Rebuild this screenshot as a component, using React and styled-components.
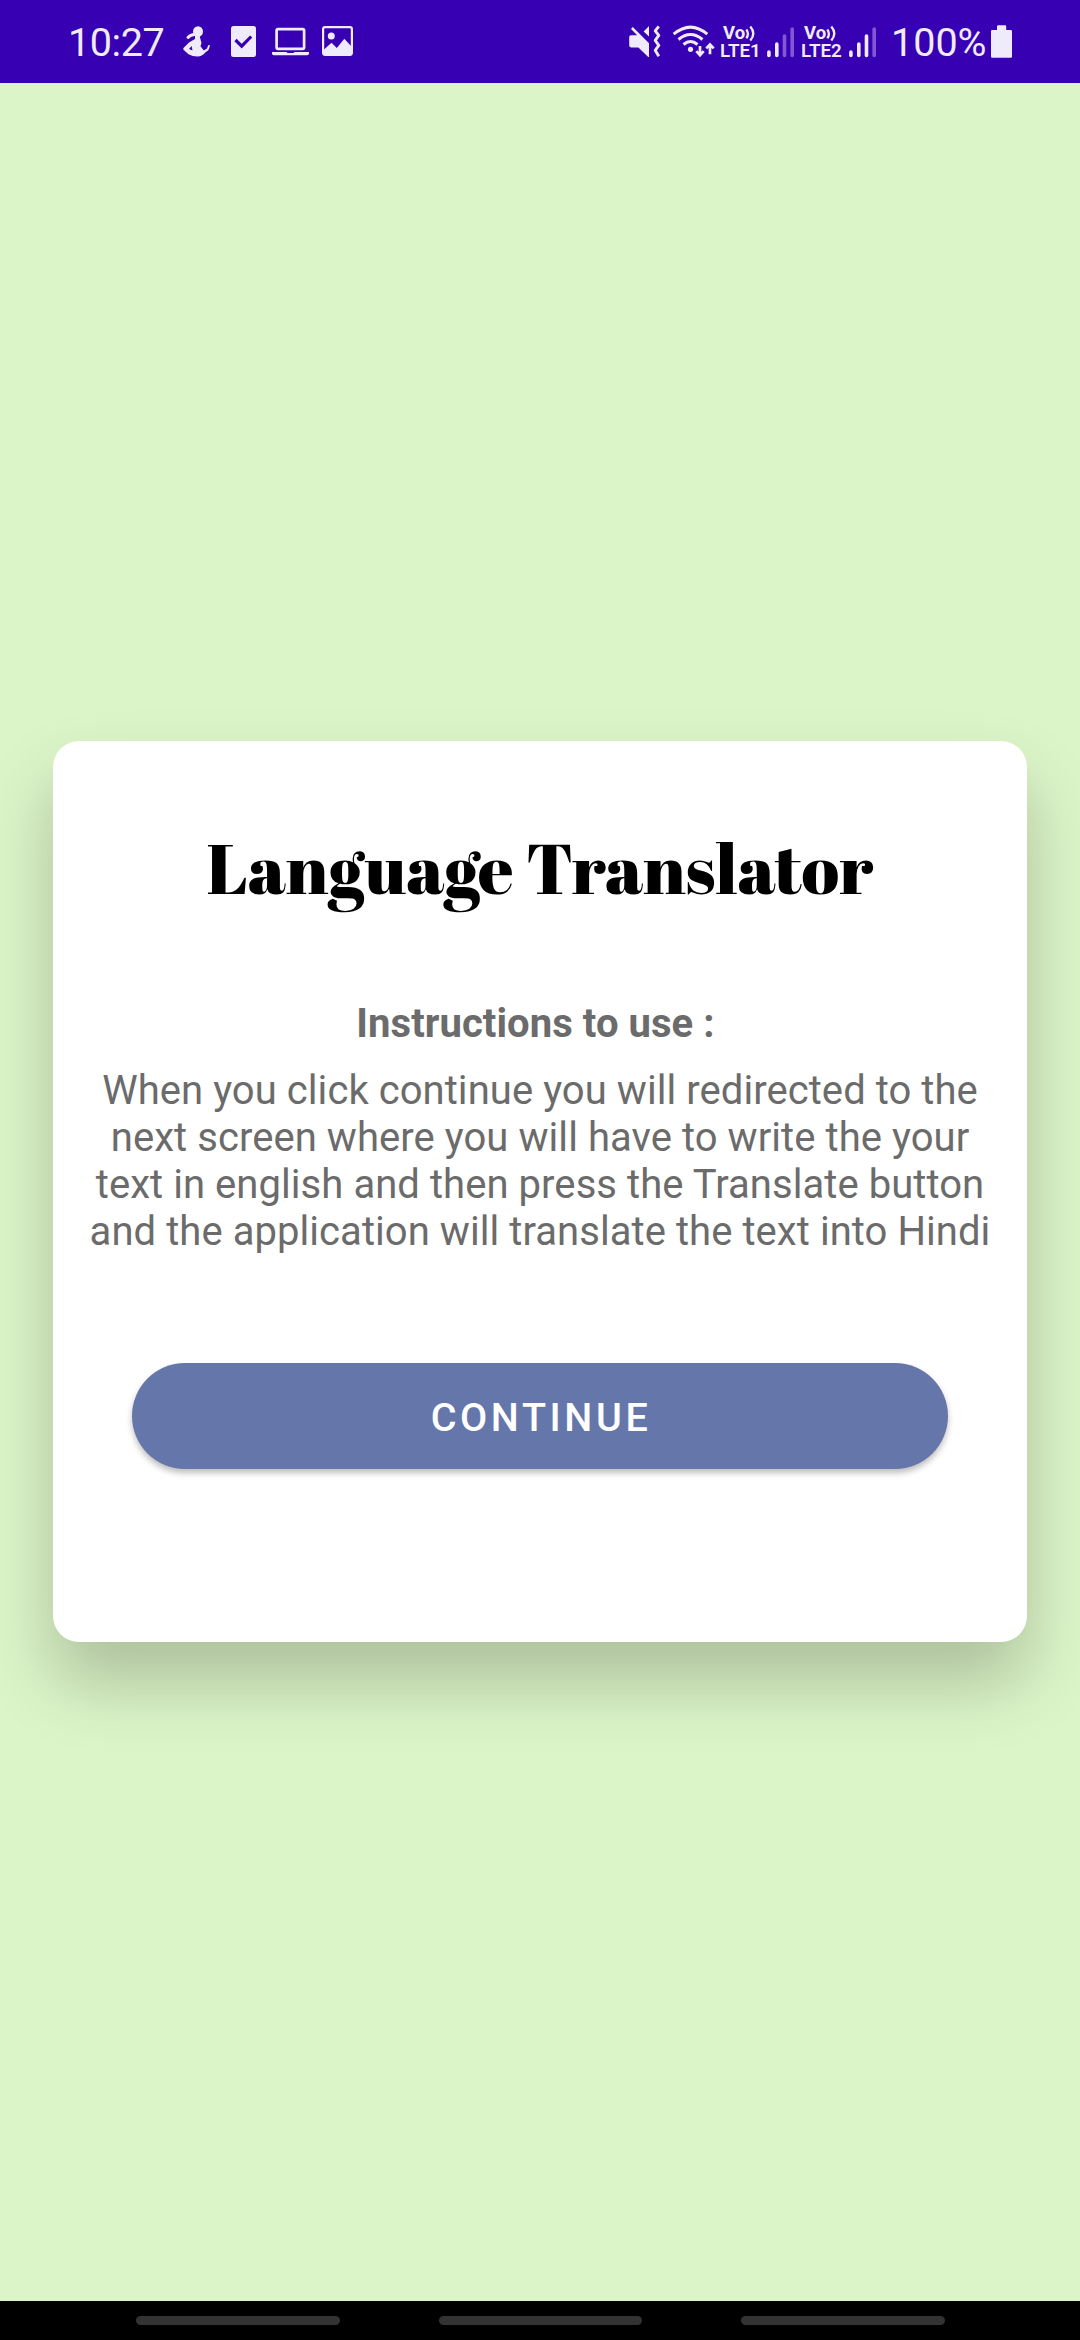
import React from "react";
import styled, { createGlobalStyle } from "styled-components";

const GlobalStyle = createGlobalStyle`
  * { box-sizing: border-box; }
  body { margin: 0; background: #dcf5c8; }
`;

const ICON = "#f0ebfb";

const Screen = styled.div`
  display: flex;
  flex-direction: column;
  width: 1080px;
  height: 2340px;
  overflow: hidden;
  background: #dcf5c8;
  font-family: Roboto, "Liberation Sans", sans-serif;
`;

const StatusBar = styled.header`
  display: flex;
  justify-content: space-between;
  flex: none;
  height: 83px;
  padding: 24px 68px 0;
  background: #3700b3;
  color: ${ICON};
`;

const StatusGroup = styled.div`
  display: flex;
  align-items: flex-start;
`;

const StatusText = styled.span`
  width: ${(p) => p.$width}px;
  margin-right: ${(p) => p.$after || 0}px;
  font-size: 39.5px;
  line-height: 38px;
  letter-spacing: ${(p) => p.$spacing || 0}px;
  white-space: nowrap;
`;

const Glyph = styled.svg`
  display: block;
  flex: none;
  margin-right: ${(p) => p.$after || 0}px;
`;

const Volte = styled.div`
  display: flex;
  flex-direction: column;
  width: ${(p) => p.$width}px;
  margin-right: ${(p) => p.$after}px;
  font-weight: 700;
  line-height: 18px;
`;

const VolteTop = styled.div`
  display: flex;
  height: 18px;
  padding-left: 3px;
  font-size: 18.5px;
`;

const VolteBottom = styled.div`
  font-size: 18.8px;
  font-weight: 600;
  white-space: nowrap;
`;

const Main = styled.main`
  flex: 1;
  padding: 658px 53px 0;
`;

const Card = styled.section`
  display: flex;
  flex-direction: column;
  align-items: center;
  height: 901px;
  padding-top: 79px;
  border-radius: 26px;
  background: #fff;
  box-shadow: 0 40px 70px rgba(0, 0, 0, 0.22);
`;

const Title = styled.h1`
  margin: 0;
  height: 96px;
  font-family: "Abril Fatface", "Liberation Serif", serif;
  font-size: 69.15px;
  font-weight: 400;
  line-height: 96px;
  white-space: nowrap;
  color: #000;
`;

const Subtitle = styled.h2`
  margin: 84px 9px 0 0;
  font-size: 40px;
  font-weight: 700;
  line-height: 47px;
  letter-spacing: 0.06px;
  color: #6b6b6b;
`;

const Instructions = styled.p`
  margin: 20px 0 0;
  font-size: 40px;
  letter-spacing: 0.06px;
  line-height: 47px;
  text-align: center;
  white-space: nowrap;
  color: #6b6b6b;
`;

const ContinueButton = styled.button`
  width: 816px;
  height: 106px;
  margin-top: 108px;
  padding: 3px 0 0 2px;
  border: 0;
  border-radius: 53px;
  background: #6576aa;
  box-shadow: 0 4px 6px rgba(0, 0, 0, 0.26);
  color: #fff;
  font-family: inherit;
  font-size: 39.5px;
  font-weight: 500;
  letter-spacing: 3.6px;
`;

const NavBar = styled.footer`
  display: flex;
  flex: none;
  gap: 99px;
  height: 39px;
  padding: 15px 0 0 136px;
  background: #000;
`;

const NavHandle = styled.span`
  width: 203.5px;
  height: 9px;
  border-radius: 5px;
  background: #333;
`;

function Figure() {
  return (
    <Glyph $after={21} width="27" height="36" viewBox="183 24 27 36">
      <g fill={ICON}>
        <ellipse cx="198" cy="31.500" rx="5" ry="5.300" />
        <path d="M195 34.500v4.500l-6 3.500l-5.300 5.200q-.8 1-.2 2l5 4.500q4 2.300 9 2.300q5.200-.2 8-4.300q4.300-2 4.300-7.200l-1.600.2l-1.200 3.200l-3.200 2l-3.300-4.200l1-3.200l-1.500-5.500l-.5-3z" />
      </g>
      <path d="M194.500 34.500q-4 .2-6.500 3" fill="none" stroke={ICON} strokeWidth="3" strokeLinecap="round" />
      <path d="M191.600 46l.9 4.500l-3.500-1.600z" fill="#3700b3" />
    </Glyph>
  );
}

function TaskDone() {
  return (
    <Glyph $after={16} width="25" height="36" viewBox="231 24 25 36">
      <rect x="231" y="26" width="25" height="31" rx="2.5" fill={ICON} />
      <path d="M235.500 40l6.200 6.200l9.500-9.700" fill="none" stroke="#3700b3" strokeWidth="3.2" />
    </Glyph>
  );
}

function Laptop() {
  return (
    <Glyph $after={13} width="37" height="36" viewBox="272 24 37 36">
      <rect x="276.600" y="29.200" width="27.500" height="19.600" rx="1.500" fill="none" stroke={ICON} strokeWidth="2.700" />
      <path d="M272 52h14.500q.5 1 1.500 1h5q1 0 1.500-1H309v1.500q0 1.800-1.800 1.800h-33.400q-1.800 0-1.800-1.800z" fill={ICON} />
    </Glyph>
  );
}

function Picture() {
  return (
    <Glyph width="31" height="36" viewBox="322 24 31 36">
      <rect x="323.100" y="27.200" width="28.800" height="27.600" rx="2" fill="none" stroke={ICON} strokeWidth="2.200" />
      <circle cx="331.300" cy="36" r="3.500" fill={ICON} />
      <path d="M324 49.500l7.500-6.700l5.300 5.200l7.500-9.200l7.200 7.700V55H324z" fill={ICON} />
    </Glyph>
  );
}

function MutedVibrate() {
  return (
    <Glyph $after={11} width="32" height="36" viewBox="629 24 32 36">
      <path
        d="M632.800 27l16.200 16.200V57h-.8l-9.800-9.600H631q-1.800 0-1.800-1.800v-8.500q0-1.800 1.800-1.800h6.200l-6.200-6.400zM649 26v10.600l-5.400-5.200z"
        fill={ICON}
      />
      <path d="M658.800 26.300l-3.600 4.500l3.600 4.500l-3.600 5l3.600 5l-3.600 5l3.600 6" fill="none" stroke={ICON} strokeWidth="2.900" strokeLinejoin="round" />
    </Glyph>
  );
}

function Wifi() {
  return (
    <Glyph $after={5} width="43" height="36" viewBox="672 24 43 36" fill="none" stroke={ICON} strokeWidth="3">
      <path d="M673.700 34.200Q690.500 20 707.300 34.200M678.500 39.500Q690.500 29.500 702.500 39.500M683.500 44.500Q690.500 38.500 697.500 44.500" />
      <circle cx="690.500" cy="49.300" r="2.600" fill={ICON} stroke="none" />
      <path d="M700 46v9M696.300 51.200l3.700 4l3.700-4M710 54.200v-9M706.300 48.400l3.700-4l3.700 4" strokeWidth="2.700" />
    </Glyph>
  );
}

function VolteMark({ sim, width, after }) {
  return (
    <Volte $width={width} $after={after}>
      <VolteTop>
        Vo
        <Glyph width="11" height="18" viewBox="0 0 11 18" fill="none" stroke={ICON} strokeWidth="2.300">
          <path d="M1.300 5.500q3.200 4.400 0 8.800M5.300 2.500q6 7 0 14" />
        </Glyph>
      </VolteTop>
      <VolteBottom>{`LTE${sim}`}</VolteBottom>
    </Volte>
  );
}

const BARS = [
  { x: 1.9, top: 52 },
  { x: 9.8, top: 44 },
  { x: 17.5, top: 36 },
  { x: 25.2, top: 29 },
];

function Signal({ level, after }) {
  return (
    <Glyph $after={after} width="27" height="36" viewBox="0 24 27 36" strokeWidth="3.600" strokeLinecap="round">
      {BARS.map((b, i) => (
        <path key={b.x} d={`M${b.x} ${b.top}V55.400`} stroke={i < level ? ICON : "#8257d4"} />
      ))}
    </Glyph>
  );
}

function Battery() {
  return (
    <Glyph width="21" height="36" viewBox="991 24 21 36" fill={ICON}>
      <path d="M997 30v-3.500q0-1.200 1.200-1.200h6.800q1.200 0 1.200 1.200V30h4.600q1.200 0 1.200 1.200v25.300q0 1.200-1.200 1.200h-18.600q-1.200 0-1.200-1.200V31.200q0-1.200 1.200-1.200z" />
    </Glyph>
  );
}

export default function App() {
  return (
    <Screen>
      <GlobalStyle />
      <StatusBar>
        <StatusGroup>
          <StatusText $width={98} $after={17} $spacing={-0.4}>10:27</StatusText>
          <Figure />
          <TaskDone />
          <Laptop />
          <Picture />
        </StatusGroup>
        <StatusGroup>
          <MutedVibrate />
          <Wifi />
          <VolteMark sim={1} width={38} after={9} />
          <Signal level={2} after={7} />
          <VolteMark sim={2} width={41} after={7} />
          <Signal level={3} after={15} />
          <StatusText $width={93} $after={7}>100%</StatusText>
          <Battery />
        </StatusGroup>
      </StatusBar>
      <Main>
        <Card>
          <Title>Language Translator</Title>
          <Subtitle>Instructions to use :</Subtitle>
          <Instructions>
            When you click continue you will redirected to the
            <br />
            next screen where you will have to write the your
            <br />
            text in english and then press the Translate button
            <br />
            and the application will translate the text into Hindi
          </Instructions>
          <ContinueButton>CONTINUE</ContinueButton>
        </Card>
      </Main>
      <NavBar>
        <NavHandle />
        <NavHandle />
        <NavHandle />
      </NavBar>
    </Screen>
  );
}
